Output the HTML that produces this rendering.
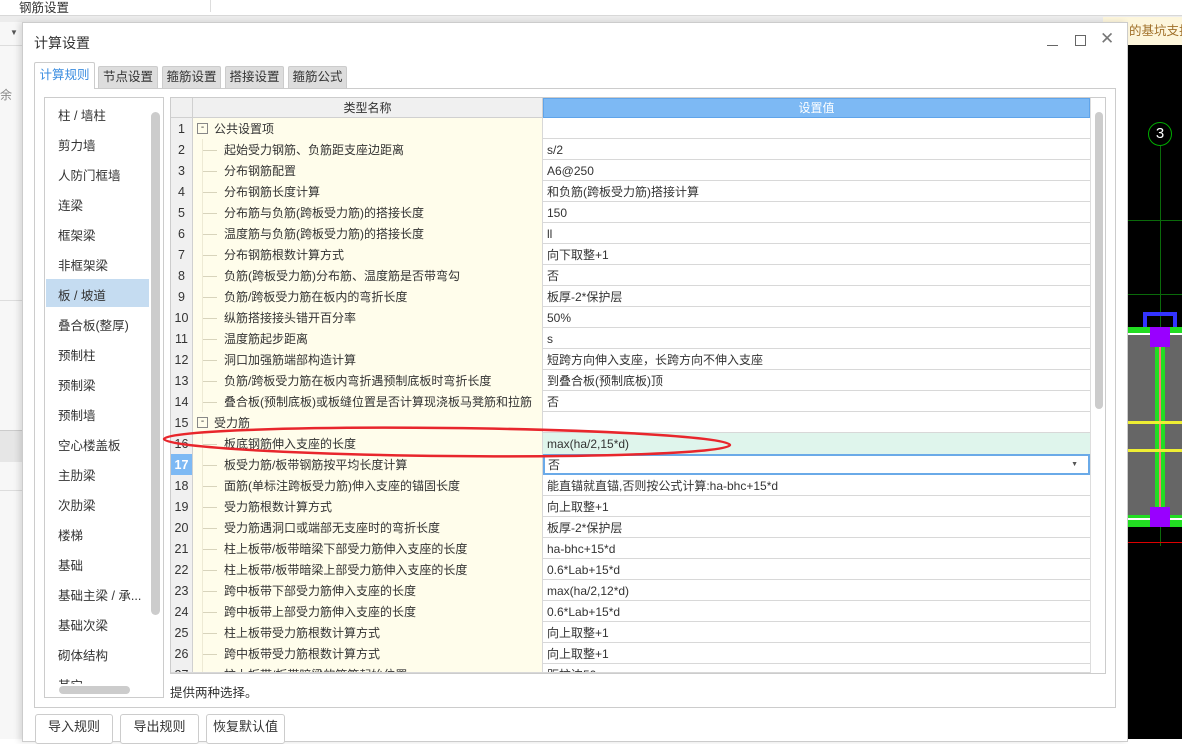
<!DOCTYPE html>
<html><head><meta charset="utf-8"><style>
*{box-sizing:border-box;margin:0;padding:0}
body{width:1182px;height:739px;overflow:hidden;position:relative;background:#fff;font-family:"Liberation Sans","Noto Sans CJK SC",sans-serif;font-size:12px;color:#333}
.a{position:absolute}
.row{position:absolute;left:171px;width:919px;height:21px;border-bottom:1px solid #d8d8d8}
.row .n{position:absolute;left:0;width:22px;height:21px;background:#f0f0f0;border-right:1px solid #d0d0d0;text-align:center;line-height:22px;font-size:12.5px}
.row .k{position:absolute;left:22px;width:350px;height:21px;background:#fffdeb;border-right:1px solid #d8d8d8;line-height:22px}
.row .k i{position:absolute;left:9px;top:0;width:1px;height:21px;background:#eeead4}
.row .k b{position:absolute;left:10px;top:11px;width:14px;height:1px;background:#d8d4bc}
.row .k span{position:absolute;left:31px;white-space:nowrap}
.row .v{position:absolute;left:372px;width:547px;height:21px;line-height:22px;padding-left:4px;white-space:nowrap}
.li{position:absolute;left:58px;font-size:12.5px}
.btn{position:absolute;top:714px;height:30px;border:1px solid #ccc;border-radius:3px;background:#fff;text-align:center;line-height:24px;font-size:13px}
.tab{position:absolute;top:66px;height:22px;background:#ddd;border:1px solid #ccc;border-bottom:none;text-align:center;line-height:20px;font-size:12.5px;border-radius:2px 2px 0 0}
</style></head><body>
<div class="a" style="left:0;top:0;width:1182px;height:16px;background:#fff;border-bottom:1px solid #d8d8d8"></div>
<div class="a" style="left:19px;top:-3px;font-size:12.5px">钢筋设置</div>
<div class="a" style="left:210px;top:0;width:1px;height:12px;background:#ddd"></div>
<div class="a" style="left:0;top:16px;width:1182px;height:7px;background:#ececec"></div>
<div class="a" style="left:0;top:22px;width:22px;height:717px;background:#f7f7f7"></div>
<div class="a" style="left:10px;top:28px;font-size:8px;color:#555">▼</div>
<div class="a" style="left:0;top:45px;width:22px;height:1px;background:#ddd"></div>
<div class="a" style="left:0;top:86px;font-size:12px;color:#888">余</div>
<div class="a" style="left:0;top:300px;width:22px;height:1px;background:#ddd"></div>
<div class="a" style="left:0;top:430px;width:22px;height:32px;background:#e6e6e6;border-top:1px solid #ccc"></div>
<div class="a" style="left:0;top:490px;width:22px;height:1px;background:#ddd"></div>
<div class="a" style="left:1103px;top:17px;width:79px;height:28px;background:#fdf6dc;color:#a0702a;font-size:12.5px;line-height:28px;padding-left:26px;white-space:nowrap;overflow:hidden">的基坑支护</div>
<div class="a" style="left:1128px;top:45px;width:54px;height:694px;background:#000"></div>
<div class="a" style="left:1148px;top:122px;width:24px;height:24px;border:1px solid #0a0;border-radius:50%;color:#fff;text-align:center;line-height:22px;font-size:15px">3</div>
<div class="a" style="left:1160px;top:146px;width:1px;height:400px;background:#0a6a0a"></div>
<div class="a" style="left:1128px;top:220px;width:54px;height:1px;background:#0a6a0a"></div>
<div class="a" style="left:1128px;top:294px;width:54px;height:1px;background:#0a6a0a"></div>
<div class="a" style="left:1128px;top:327px;width:54px;height:200px;background:#666"></div>
<div class="a" style="left:1143px;top:312px;width:34px;height:17px;border:4px solid #33f;border-bottom:none"></div>
<div class="a" style="left:1128px;top:327px;width:54px;height:6px;background:#2d2"></div>
<div class="a" style="left:1128px;top:333px;width:54px;height:2px;background:#fff"></div>
<div class="a" style="left:1128px;top:515px;width:54px;height:12px;background:#2d2"></div>
<div class="a" style="left:1128px;top:518px;width:54px;height:2px;background:#fff"></div>
<div class="a" style="left:1155px;top:333px;width:10px;height:182px;background:#2d2"></div>
<div class="a" style="left:1159px;top:340px;width:2px;height:180px;background:#f77"></div>
<div class="a" style="left:1128px;top:421px;width:54px;height:3px;background:#ee3"></div>
<div class="a" style="left:1128px;top:449px;width:54px;height:3px;background:#ee3"></div>
<div class="a" style="left:1150px;top:327px;width:20px;height:20px;background:#90f"></div>
<div class="a" style="left:1150px;top:507px;width:20px;height:20px;background:#90f"></div>
<div class="a" style="left:1128px;top:542px;width:54px;height:1px;background:#d00"></div>
<div class="a" style="left:22px;top:22px;width:1106px;height:720px;background:#fff;border:1px solid #ccc;box-shadow:-3px 0 6px rgba(0,0,0,.12)"></div>
<div class="a" style="left:34px;top:33px;font-size:14px;color:#333">计算设置</div>
<div class="a" style="left:1047px;top:45px;width:11px;height:1px;background:#666"></div>
<div class="a" style="left:1075px;top:35px;width:11px;height:11px;border:1px solid #666"></div>
<div class="a" style="left:1100px;top:29px;font-size:17px;color:#777">✕</div>
<div class="tab" style="left:34px;top:62px;width:61px;height:27px;background:#fff;color:#3b8de0;z-index:2;line-height:24px">计算规则</div>
<div class="tab" style="left:98px;width:60px">节点设置</div>
<div class="tab" style="left:162px;width:59px">箍筋设置</div>
<div class="tab" style="left:225px;width:59px">搭接设置</div>
<div class="tab" style="left:288px;width:59px">箍筋公式</div>
<div class="a" style="left:34px;top:88px;width:1082px;height:620px;border:1px solid #ccc"></div>
<div class="a" style="left:44px;top:97px;width:120px;height:601px;border:1px solid #ccc;overflow:hidden">
<div class="a" style="left:1px;top:181px;width:103px;height:28px;background:#c5dcf1"></div>
</div>
<div class="li" style="top:105px">柱 / 墙柱</div>
<div class="li" style="top:135px">剪力墙</div>
<div class="li" style="top:165px">人防门框墙</div>
<div class="li" style="top:195px">连梁</div>
<div class="li" style="top:225px">框架梁</div>
<div class="li" style="top:255px">非框架梁</div>
<div class="li" style="top:285px">板 / 坡道</div>
<div class="li" style="top:315px">叠合板(整厚)</div>
<div class="li" style="top:345px">预制柱</div>
<div class="li" style="top:375px">预制梁</div>
<div class="li" style="top:405px">预制墙</div>
<div class="li" style="top:435px">空心楼盖板</div>
<div class="li" style="top:465px">主肋梁</div>
<div class="li" style="top:495px">次肋梁</div>
<div class="li" style="top:525px">楼梯</div>
<div class="li" style="top:555px">基础</div>
<div class="li" style="top:585px">基础主梁 / 承...</div>
<div class="li" style="top:615px">基础次梁</div>
<div class="li" style="top:645px">砌体结构</div>
<div class="li" style="top:675px;height:9px;overflow:hidden">其它</div>
<div class="a" style="left:151px;top:112px;width:9px;height:503px;background:#ccc;border-radius:5px"></div>
<div class="a" style="left:59px;top:686px;width:71px;height:8px;background:#ccc;border-radius:4px"></div>
<div class="a" style="left:170px;top:97px;width:936px;height:577px;border:1px solid #ccc;overflow:hidden">
<div class="a" style="left:0;top:0;width:22px;height:20px;background:#f0f0f0;border-right:1px solid #d0d0d0;border-bottom:1px solid #d0d0d0"></div>
<div class="a" style="left:22px;top:0;width:350px;height:20px;background:#f0f0f0;border-right:1px solid #d0d0d0;border-bottom:1px solid #d0d0d0;text-align:center;line-height:20px">类型名称</div>
<div class="a" style="left:372px;top:0;width:547px;height:20px;background:#7db9f4;border:1px solid #5fa4ea;text-align:center;line-height:19px;color:#fff">设置值</div>
<div class="a" style="left:919px;top:0;width:16px;height:577px;background:#fff;border-left:1px solid #ddd"></div>
<div class="a" style="left:924px;top:14px;width:8px;height:297px;background:#ccc;border-radius:4px"></div>
</div>
<div id="rows"></div>
<div class="a" style="left:170px;top:682px;font-size:12.5px">提供两种选择。</div>
<div class="btn" style="left:35px;width:78px">导入规则</div>
<div class="btn" style="left:120px;width:79px">导出规则</div>
<div class="btn" style="left:206px;width:79px">恢复默认值</div>
<script>
var d=[["公共设置项",""],["起始受力钢筋、负筋距支座边距离","s/2"],["分布钢筋配置","A6@250"],["分布钢筋长度计算","和负筋(跨板受力筋)搭接计算"],["分布筋与负筋(跨板受力筋)的搭接长度","150"],["温度筋与负筋(跨板受力筋)的搭接长度","ll"],["分布钢筋根数计算方式","向下取整+1"],["负筋(跨板受力筋)分布筋、温度筋是否带弯勾","否"],["负筋/跨板受力筋在板内的弯折长度","板厚-2*保护层"],["纵筋搭接接头错开百分率","50%"],["温度筋起步距离","s"],["洞口加强筋端部构造计算","短跨方向伸入支座，长跨方向不伸入支座"],["负筋/跨板受力筋在板内弯折遇预制底板时弯折长度","到叠合板(预制底板)顶"],["叠合板(预制底板)或板缝位置是否计算现浇板马凳筋和拉筋","否"],["受力筋",""],["板底钢筋伸入支座的长度","max(ha/2,15*d)"],["板受力筋/板带钢筋按平均长度计算","否"],["面筋(单标注跨板受力筋)伸入支座的锚固长度","能直锚就直锚,否则按公式计算:ha-bhc+15*d"],["受力筋根数计算方式","向上取整+1"],["受力筋遇洞口或端部无支座时的弯折长度","板厚-2*保护层"],["柱上板带/板带暗梁下部受力筋伸入支座的长度","ha-bhc+15*d"],["柱上板带/板带暗梁上部受力筋伸入支座的长度","0.6*Lab+15*d"],["跨中板带下部受力筋伸入支座的长度","max(ha/2,12*d)"],["跨中板带上部受力筋伸入支座的长度","0.6*Lab+15*d"],["柱上板带受力筋根数计算方式","向上取整+1"],["跨中板带受力筋根数计算方式","向上取整+1"],["柱上板带/板带暗梁的箍筋起始位置","距柱边50mm"]];
var h="";
d.forEach(function(r,i){var n=i+1,t=118+i*21,hdr=(n==1||n==15);
var ns=n==17?'background:#7db9f4;color:#fff;font-weight:bold':'';
var vs=n==16?'background:#dff5ec':(n==17?'border:2px solid #6aaae8;line-height:18px;padding-left:3px':'');
var hh=n==27?'height:'+(673-t)+'px;overflow:hidden;':'';
h+='<div class="row" style="top:'+t+'px;'+hh+'"><div class="n" style="'+ns+'">'+n+'</div><div class="k">'+(hdr?'<div class="a" style="left:4px;top:5px;width:11px;height:11px;border:1px solid #888;font-size:10px;line-height:8px;text-align:center">-</div><span style="left:21px">'+r[0]+'</span>':'<i></i><b></b><span>'+r[0]+'</span>')+'</div><div class="v" style="'+vs+'">'+r[1]+(n==17?'<span class="a" style="right:10px;top:0;font-size:7px;color:#555">▼</span>':'')+'</div></div>';});
document.getElementById('rows').innerHTML=h;
</script>
<svg class="a" style="left:0;top:0" width="1182" height="739"><ellipse cx="447" cy="442" rx="283" ry="14" transform="rotate(0.6 447 442)" fill="none" stroke="#e8262c" stroke-width="2.5"/></svg>
</body></html>
